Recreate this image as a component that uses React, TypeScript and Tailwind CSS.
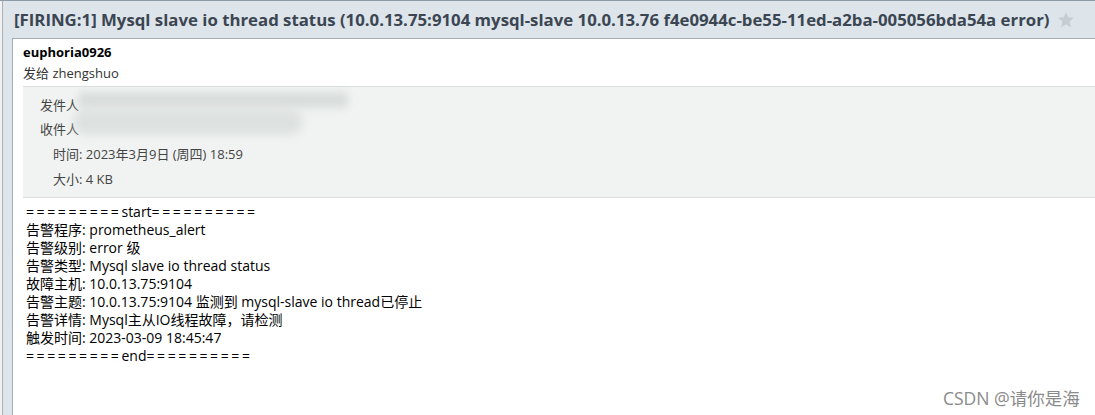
export default function App() {
  const body = [
    "告警程序: prometheus_alert",
    "告警级别: error 级",
    "告警类型: Mysql slave io thread status",
    "故障主机: 10.0.13.75:9104",
    "告警主题: 10.0.13.75:9104 监测到 mysql-slave io thread已停止",
    "告警详情: Mysql主从IO线程故障，请检测",
    "触发时间: 2023-03-09 18:45:47",
  ]
  return (
    <div
      className="relative w-[1095px] h-[415px] overflow-hidden flex bg-[#dde4ea] border-t border-[#8e9aa6] text-[#222]"
      style={{ fontFamily: '"Open Sans", "Noto Sans CJK SC", sans-serif' }}
    >
      <div className="w-[3px] shrink-0 bg-[#f2f2f2] border-r border-[#a9b1b9]" />
      <div className="flex-1 flex flex-col min-w-0">
        <div className="h-[37px] shrink-0 flex items-center pl-[11px] gap-[8px] whitespace-nowrap">
          <span className="text-[16.8px] font-bold text-[#3b4652]">
            [FIRING:1] Mysql slave io thread status (10.0.13.75:9104 mysql-slave 10.0.13.76 f4e0944c-be55-11ed-a2ba-005056bda54a error)
          </span>
          <svg width="18" height="18" viewBox="0 0 24 24" className="shrink-0">
            <path
              d="M12 1.5l3.1 6.9 7.4.7-5.6 5 1.6 7.4L12 17.7l-6.5 3.8 1.6-7.4-5.6-5 7.4-.7z"
              fill="#c6ccd2"
            />
          </svg>
        </div>
        <div className="flex-1 ml-[9px] bg-white border-l border-t border-[#a3acb4] flex flex-col">
          <div className="pl-[10px] pt-[4px] h-[47px] text-[13px]">
            <div className="font-bold text-black leading-[18px]">euphoria0926</div>
            <div className="text-[#333] leading-[18px] mt-[3px]">发给 zhengshuo</div>
          </div>
          <div className="ml-[10px] bg-[#f0f3f2] border-y border-[#dcdfde] h-[112px] text-[13px] text-[#444] relative">
            <div className="pl-[17px] pt-[7px] flex flex-col">
              <div className="h-[24px] flex items-center">发件人</div>
              <div className="h-[24px] flex items-center">收件人</div>
              <div className="h-[26px] flex items-center pl-[13px]">时间: 2023年3月9日 (周四) 18:59</div>
              <div className="h-[24px] flex items-center pl-[13px]">大小: 4 KB</div>
            </div>
            <div className="absolute left-[55px] top-[5px] w-[270px] h-[16px] bg-[#d3d7d6] blur-[4px] opacity-80 rounded" />
            <div className="absolute left-[50px] top-[22px] w-[230px] h-[26px] bg-[#d9dddc] blur-[5px] opacity-80 rounded-full" />
          </div>
          <div className="pl-[13px] pt-[5px] text-[14px] leading-[18px] text-black">
            <div className="whitespace-pre">
              <span className="tracking-[2.6px]">=========</span>start<span className="tracking-[2.6px]">==========</span>
            </div>
            {body.map((l, i) => (
              <div key={i} className="whitespace-pre">{l}</div>
            ))}
            <div className="whitespace-pre">
              <span className="tracking-[2.6px]">=========</span>end<span className="tracking-[2.6px]">==========</span>
            </div>
          </div>
        </div>
      </div>
      <div className="absolute left-[943px] top-[384px] text-[17.5px] text-[#8a8a8a] whitespace-nowrap">
        CSDN @请你是海
      </div>
    </div>
  )
}
